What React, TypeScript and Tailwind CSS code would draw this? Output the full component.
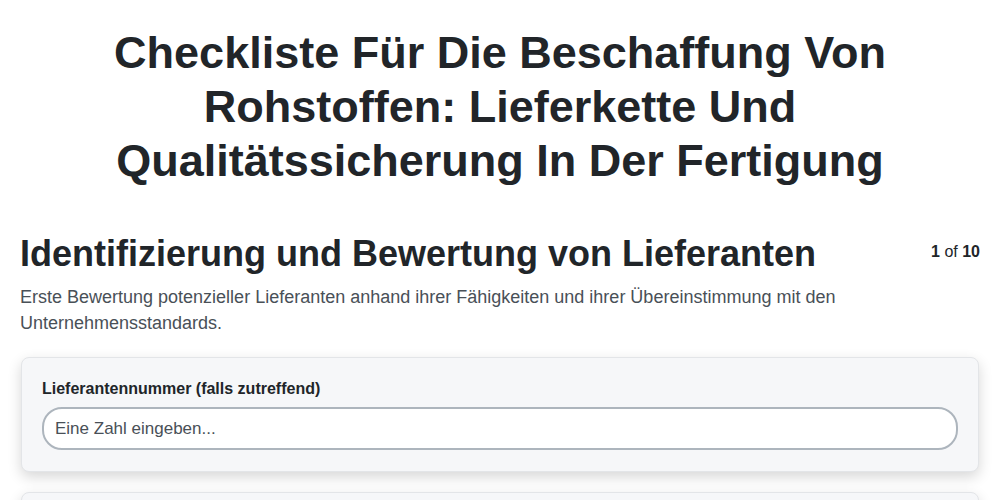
import React from "react";

export default function App() {
  return (
    <div className="min-h-screen bg-white" style={{ fontFamily: '"Liberation Sans", Arial, sans-serif' }}>
      <div className="px-5 pt-[26px]">
        <h1 className="mx-auto max-w-[820px] text-center text-[45px] font-bold leading-[54px] text-[#212529]">
          Checkliste Für Die Beschaffung Von Rohstoffen: Lieferkette Und Qualitätssicherung In Der Fertigung
        </h1>
        <div className="mt-[44px] flex items-start justify-between">
          <h2 className="text-[36px] font-bold leading-[44px] text-[#212529]">
            Identifizierung und Bewertung von Lieferanten
          </h2>
          <div className="mt-[8px] text-[16px] text-[#212529]">
            <span className="font-bold">1</span> of <span className="font-bold">10</span>
          </div>
        </div>
        <p className="mt-[8px] max-w-[840px] text-[18px] leading-[26px] text-[#495057]">
          Erste Bewertung potenzieller Lieferanten anhand ihrer Fähigkeiten und ihrer Übereinstimmung mit den Unternehmensstandards.
        </p>
        <div className="mx-[1px] mt-[21px] flex flex-col gap-[20px]">
          <div className="rounded-lg border border-[#e3e5e8] bg-[#f6f7f9] px-[20px] pb-[21px] pt-[20px] shadow-[0_5px_14px_rgba(0,0,0,0.16)]">
            <label className="block text-[16px] font-bold leading-[22px] text-[#212529]">
              Lieferantennummer (falls zutreffend)
            </label>
            <input
              type="text"
              placeholder="Eine Zahl eingeben..."
              className="mt-[7px] h-[43px] w-full rounded-[20px] border-2 border-[#adb5bd] bg-white px-[11px] text-[17px] text-[#212529] placeholder:text-[#495057] outline-none"
            />
          </div>
          <div className="h-[80px] rounded-lg border border-[#e3e5e8] bg-[#f6f7f9] shadow-[0_5px_14px_rgba(0,0,0,0.16)]"></div>
        </div>
      </div>
    </div>
  );
}
